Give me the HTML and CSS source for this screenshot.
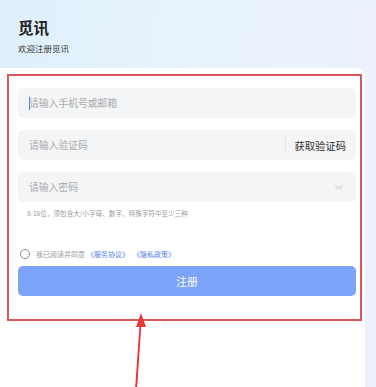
FILE: index.html
```html
<!DOCTYPE html>
<html lang="zh">
<head>
  <meta charset="UTF-8">
  <meta name="viewport" content="width=device-width, initial-scale=1">
  <title>觅讯 注册</title>
  <link rel="stylesheet" href="styles.css">
</head>
<body>

<div class="page">
  <div class="header">
    <h1>觅讯</h1>
    <p>欢迎注册觅讯</p>
  </div>

  <div class="card">
    <!-- 标注框 -->
    <div class="mark-box">
      <div class="field">
        <span class="caret"></span>
        <input type="text" placeholder="请输入手机号或邮箱">
      </div>

      <div class="field">
        <input type="text" placeholder="请输入验证码">
        <span class="divider"></span>
        <span class="get-code">获取验证码</span>
      </div>

      <div class="field">
        <input type="password" placeholder="请输入密码">
        <svg class="eye" width="10" height="6" viewBox="0 0 10 6">
          <path d="M1 1.5 Q5 5 9 1.5 M3 3.6 L2.4 4.8 M5 4.2 L5 5.4 M7 3.6 L7.6 4.8" fill="none" stroke="#c8c8c8" stroke-width="0.8" stroke-linecap="round"/>
        </svg>
      </div>
      <p class="hint">8-16位，须包含大/小字母、数字、特殊字符中至少三种</p>

      <div class="agree">
        <span class="radio"></span>
        <span class="agree-text">我已阅读并同意</span>
        <a href="#">《服务协议》</a>
        <a href="#">《隐私政策》</a>
      </div>

      <button type="button">注册</button>
    </div>
  </div>

  <!-- 标注箭头 -->
  <svg class="arrow" width="40" height="80" viewBox="0 0 40 80">
    <path d="M15.2 75 L19.6 12 L21.4 12 L17.2 75 Z" fill="#e8363a"/>
    <path d="M21 1 L26 15 L16 15 Z" fill="#e8363a"/>
  </svg>
</div>

</body>
</html>
```

FILE: styles.css
```css
body {
  margin: 0;
  padding: 0;
  font-family: "Noto Sans CJK SC", "Noto Sans", sans-serif;
  background: #ffffff;
}
.page {
  position: relative;
  width: 376px;
  height: 387px;
  overflow: hidden;
  background: linear-gradient(100deg, #dff0fb 0%, #e9f3fc 55%, #eef1fb 100%);
}
.header {
  padding: 16px 18px 0 18px;
  height: 68px;
  box-sizing: border-box;
}
.header h1 {
  margin: 0;
  font-size: 15.5px;
  line-height: 22px;
  font-weight: 700;
  color: #222;
}
.header p {
  margin: 4px 0 0;
  font-size: 8.5px;
  line-height: 12px;
  color: #333;
}
.card {
  background: #ffffff;
  margin-right: 11px;
  border-top-right-radius: 10px;
  padding-top: 6px;
  height: 400px;
}
.mark-box {
  margin-left: 7px;
  width: 355px;
  box-sizing: border-box;
  border: 2px solid #d8585a;
  padding: 12px 4px 23px 9px;
}
.field {
  position: relative;
  display: flex;
  align-items: center;
  height: 30px;
  background: #f4f5f6;
  border-radius: 5px;
  margin-bottom: 12px;
  padding: 0 10px 0 11px;
}
.field input {
  flex: 1;
  min-width: 0;
  border: none;
  background: transparent;
  outline: none;
  padding: 0;
  font-family: inherit;
  font-size: 9.8px;
  color: #333;
}
.field input::placeholder {
  color: #a9abad;
}
.caret {
  position: absolute;
  left: 11px;
  top: 9px;
  width: 1px;
  height: 13px;
  background: #4d7ff0;
}
.divider {
  width: 1px;
  height: 18px;
  background: #e6e7e8;
  margin-right: 9px;
}
.get-code {
  font-size: 10.3px;
  color: #333;
}
.eye {
  margin-right: 2px;
}
.hint {
  margin: -7px 0 0 9px;
  font-size: 6.6px;
  line-height: 12px;
  color: #9a9c9e;
}
.agree {
  display: flex;
  align-items: center;
  margin-top: 29px;
  height: 12px;
  font-size: 7px;
}
.radio {
  width: 8px;
  height: 8px;
  border: 1px solid #8a8c8e;
  border-radius: 50%;
  margin: 0 6px 0 2px;
}
.agree-text {
  color: #999;
  margin-right: 2px;
}
.agree a {
  color: #4f7fe8;
  text-decoration: none;
  margin-right: 4px;
}
button {
  display: block;
  width: 100%;
  height: 30px;
  margin-top: 6px;
  border: none;
  border-radius: 5px;
  background: #7aa3f9;
  color: #ffffff;
  font-family: inherit;
  font-size: 11px;
  cursor: pointer;
}
.arrow {
  position: absolute;
  left: 120px;
  top: 312px;
}
```
